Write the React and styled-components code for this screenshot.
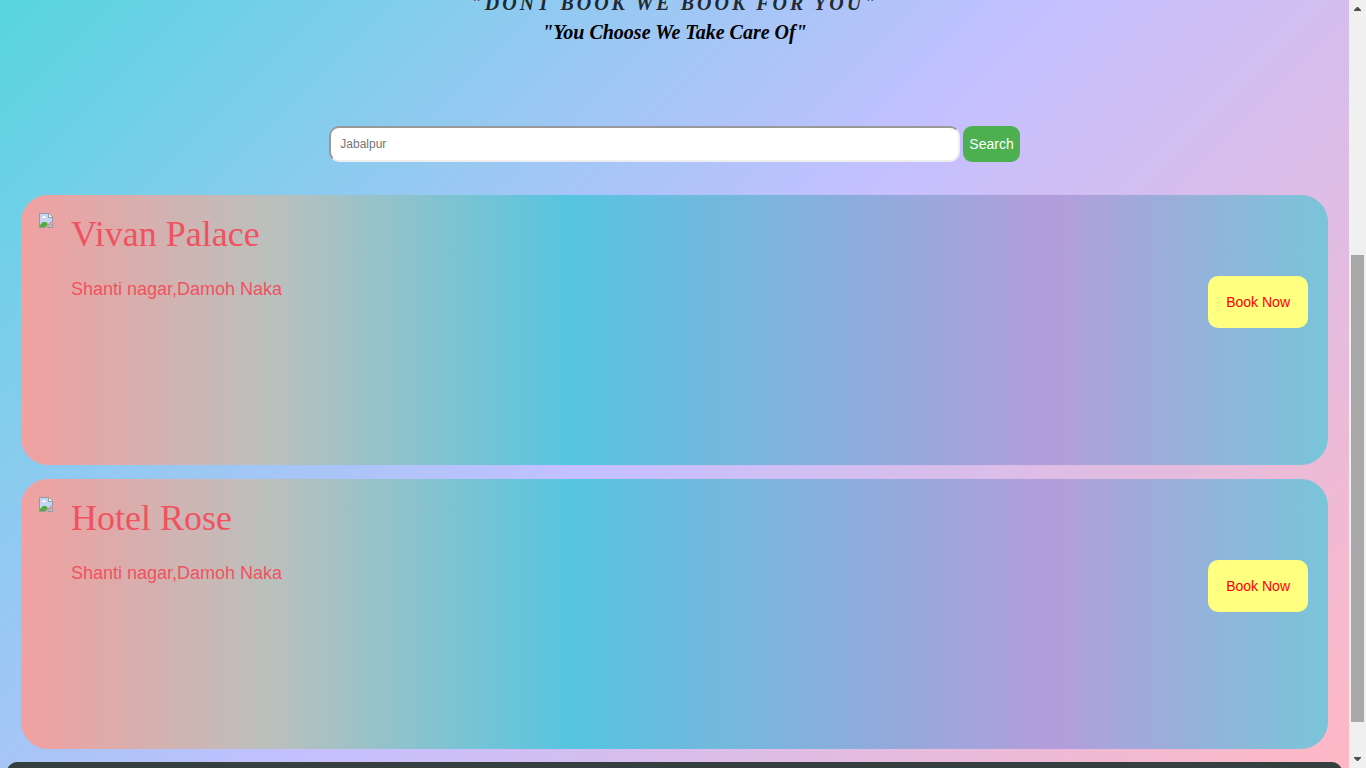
import React from "react";
import styled, { createGlobalStyle } from "styled-components";

const GlobalStyle = createGlobalStyle`
  * { box-sizing: border-box; }
  body {
    margin: 0;
    overflow: hidden;
    font-family: "Liberation Sans", Arial, sans-serif;
  }
`;

const Window = styled.div`
  display: flex;
  height: 100vh;
  overflow: hidden;
`;

const Page = styled.main`
  flex: 1;
  min-width: 0;
  display: flex;
  flex-direction: column;
  overflow: hidden;
  background: linear-gradient(135deg, #57d5e0 0%, #c4c0ff 50%, #ffb8c4 100%);
`;

const Header = styled.header`
  flex: none;
  height: 46px;
  overflow: hidden;
  display: flex;
  flex-direction: column;
  justify-content: flex-end;
  align-items: center;
  font-family: "Liberation Serif", "Times New Roman", serif;
  font-style: italic;
  font-weight: 700;
  white-space: nowrap;
`;

const Slogan = styled.h2`
  flex: none;
  margin: 0;
  font-size: 20px;
  line-height: 30px;
  font-weight: 700;
  letter-spacing: 3px;
  color: #1f2a33;
`;

const Tagline = styled.p`
  flex: none;
  margin: 0;
  font-size: 20px;
  line-height: 28px;
  color: #000;
`;

const SearchForm = styled.form`
  flex: none;
  display: flex;
  justify-content: center;
  align-items: center;
  gap: 3px;
  margin: 80px 21px 33px;
`;

const SearchInput = styled.input`
  flex: 0 1 631px;
  min-width: 0;
  height: 36px;
  padding: 0 9px;
  border: 2px solid;
  border-color: #999 #eee #eee #999;
  border-radius: 10px;
  background: #fff;
  font-family: "Liberation Sans", Arial, sans-serif;
  font-size: 12px;
  &::placeholder { color: #757575; }
`;

const SearchButton = styled.button`
  flex: none;
  height: 36px;
  padding: 0 6px;
  border: 0;
  border-radius: 9px;
  background: #4caf50;
  color: #fff;
  font-family: "Liberation Sans", Arial, sans-serif;
  font-size: 14px;
`;

const HotelList = styled.section`
  flex: none;
  display: flex;
  flex-direction: column;
  gap: 14px;
  padding: 0 21px;
`;

const HotelCard = styled.article`
  display: flex;
  align-items: flex-start;
  min-height: 270px;
  padding: 18px 20px 18px 18px;
  border-radius: 27px;
  background: linear-gradient(
    90deg,
    #f1a1a1 0%,
    #e9a4a4 3%,
    #bbc0bd 19%,
    #56c5e0 42%,
    #88afdc 62%,
    #b39ddb 79%,
    #79c5d9 100%
  );
`;

const Thumbnail = styled.svg`
  flex: none;
  width: 14px;
  height: 15px;
  margin-right: 18px;
`;

const Details = styled.div`
  flex: 1;
  min-width: 0;
  color: #f0525f;
`;

const HotelName = styled.h3`
  margin: 0 0 22px;
  font-family: "Liberation Serif", "Times New Roman", serif;
  font-size: 36px;
  line-height: 42px;
  font-weight: 400;
`;

const Address = styled.p`
  margin: 0;
  font-size: 18px;
  line-height: 24px;
`;

const BookButton = styled.button`
  flex: none;
  height: 52px;
  margin-top: 63px;
  padding: 0 18px;
  border: 0;
  border-radius: 10px;
  background: #ffff80;
  color: #f00;
  font-family: "Liberation Sans", Arial, sans-serif;
  font-size: 14px;
`;

const Footer = styled.footer`
  flex: none;
  height: 60px;
  margin: 13px 7px 0;
  border-radius: 10px 10px 0 0;
  background: #353f3f;
`;

const Scrollbar = styled.div`
  flex: none;
  width: 17px;
  display: flex;
  flex-direction: column;
  align-items: center;
  background: #f0f0f0;
`;

const Arrow = styled.svg`
  flex: none;
  width: 17px;
  height: 17px;
`;

const Track = styled.div`
  flex: 1;
  display: flex;
  flex-direction: column;
`;

const Space = styled.div`
  flex: ${(p) => p.$share};
`;

const Thumb = styled.div`
  flex: 467;
  width: 13px;
  background: #a8a8a8;
`;

const hotels = [
  { name: "Vivan Palace", address: "Shanti nagar,Damoh Naka" },
  { name: "Hotel Rose", address: "Shanti nagar,Damoh Naka" },
];

function MissingImage() {
  return (
    <Thumbnail viewBox="0 0 14 15" aria-hidden="true">
      <path d="M0 0H10L14 4V8L6 15H0Z" fill="#929aa2" />
      <path d="M1 1H9V5H13V8L6 14H1Z" fill="#c5d5f5" />
      <path d="M10 1L13 4H10Z" fill="#fff" />
      <path d="M3 5V4H4V3H6V4H7V5Z" fill="#fff" />
      <path d="M1 14V12L4 9H7L9 11L6 14Z" fill="#55ad38" />
      <path d="M14 10V15H8Z" fill="#929aa2" />
      <path d="M13 12V14H10Z" fill="#c5d5f5" />
    </Thumbnail>
  );
}

export default function App() {
  return (
    <>
      <GlobalStyle />
      <Window>
        <Page>
          <Header>
            <Slogan>"DONT BOOK WE BOOK FOR YOU"</Slogan>
            <Tagline>"You Choose We Take Care Of"</Tagline>
          </Header>
          <SearchForm onSubmit={(e) => e.preventDefault()}>
            <SearchInput type="text" placeholder="Jabalpur" aria-label="City" />
            <SearchButton type="submit">Search</SearchButton>
          </SearchForm>
          <HotelList>
            {hotels.map((hotel) => (
              <HotelCard key={hotel.name}>
                <MissingImage />
                <Details>
                  <HotelName>{hotel.name}</HotelName>
                  <Address>{hotel.address}</Address>
                </Details>
                <BookButton type="button">Book Now</BookButton>
              </HotelCard>
            ))}
          </HotelList>
          <Footer />
        </Page>
        <Scrollbar aria-hidden="true">
          <Arrow viewBox="0 0 17 17">
            <path d="M5 11V10L8 7H9L12 10V11Z" fill="#505050" />
          </Arrow>
          <Track>
            <Space $share={238} />
            <Thumb />
            <Space $share={29} />
          </Track>
          <Arrow viewBox="0 0 17 17">
            <path d="M5 6H12V7L9 10H8L5 7Z" fill="#505050" />
          </Arrow>
        </Scrollbar>
      </Window>
    </>
  );
}
